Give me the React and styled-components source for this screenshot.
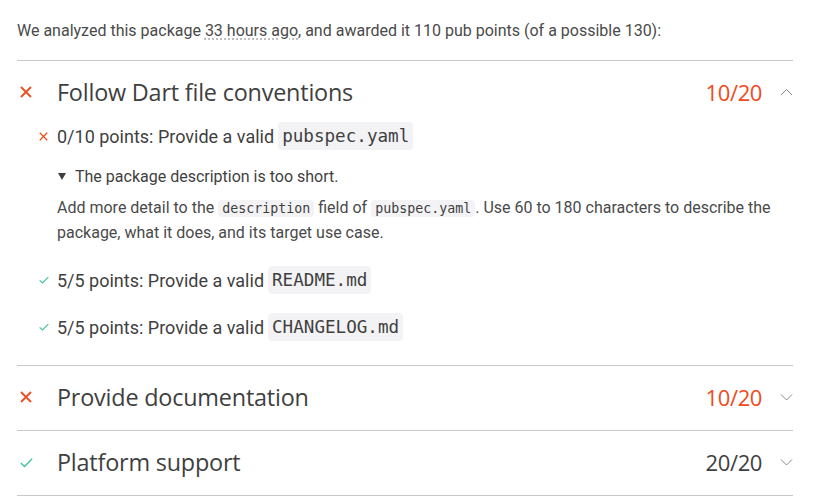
import React from "react";
import styled, { createGlobalStyle } from "styled-components";

const Global = createGlobalStyle`
  html, body { margin: 0; padding: 0; background: #fff; }
  body { font-family: Roboto, "Liberation Sans", sans-serif; color: #4a4a4a; }
`;

const ORANGE = "#ef4b1c";
const GREEN = "#3cc49c";

const Page = styled.div`
  width: 776px;
  padding: 19px 0 0 17px;
`;

const Intro = styled.p`
  margin: 0 0 17px;
  font-size: 16px;
  line-height: 24px;
  color: #4a4a4a;
`;

const Time = styled.span`
  text-decoration: underline dotted #b0b0b0;
  text-underline-offset: 3px;
`;

const Section = styled.section`
  border-top: 1px solid #c8c8c8;
  padding-bottom: ${(p) => (p.$open ? "23px" : "3px")};
  &:last-child { border-bottom: 1px solid #c8c8c8; }
`;

const Header = styled.div`
  display: flex;
  align-items: center;
  height: 60px;
  padding-top: 1px;
`;

const HeadIcon = styled.div`
  width: 40px;
  display: flex;
  align-items: center;
  padding-left: 3px;
  box-sizing: border-box;
`;

const Title = styled.h3`
  flex: 1;
  margin: 0;
  font-family: "Open Sans", Roboto, sans-serif;
  font-weight: 400;
  font-size: 23.4px;
  letter-spacing: -0.2px;
  color: #3f3f3f;
`;

const Score = styled.span`
  font-family: "Open Sans", Roboto, sans-serif;
  font-size: 22px;
  letter-spacing: -0.4px;
  color: ${(p) => (p.$fail ? ORANGE : "#3f3f3f")};
  margin-right: 18px;
`;

const Chevron = styled.div`
  width: 13px;
  display: flex;
  align-items: center;
`;

const Body = styled.div`
  padding-left: 22px;
`;

const Item = styled.div`
  margin-top: ${(p) => p.$mt}px;
`;

const ItemRow = styled.div`
  display: flex;
  align-items: center;
  height: 30px;
`;

const SmallIcon = styled.div`
  width: 18px;
  display: flex;
  align-items: center;
`;

const ItemText = styled.span`
  font-size: 18px;
  color: #3f3f3f;
`;

const Code = styled.code`
  font-family: "DejaVu Sans Mono", "Liberation Mono", monospace;
  font-size: ${(p) => (p.$small ? "13.3px" : "17.6px")};
  background: #f3f3f5;
  border-radius: 4px;
  padding: ${(p) => (p.$small ? "1px 4px" : "4px 4px")};
  color: #3f3f3f;
  margin-left: ${(p) => (p.$small ? "0" : "4px")};
`;

const Detail = styled.div`
  padding-left: 18px;
  margin-top: 13px;
`;

const Summary = styled.div`
  display: flex;
  align-items: center;
  height: 24px;
  font-size: 16px;
  color: #3f3f3f;
  padding-left: 1px;
`;

const Tri = styled.span`
  width: 17px;
  display: flex;
  align-items: center;
`;

const Para = styled.p`
  margin: 8px 0 0;
  font-size: 16px;
  line-height: 24px;
  color: #4a4a4a;
  width: 715px;
`;

const Cross = ({ size, w }) => (
  <svg width={size} height={size} viewBox="0 0 12 12">
    <path d="M1 1L11 11M11 1L1 11" stroke={ORANGE} strokeWidth={w} fill="none" />
  </svg>
);

const Check = ({ size, w }) => (
  <svg width={size} height={size} viewBox="0 0 12 12">
    <path d="M0.8 6.4L4.2 9.6L11.2 2.6" stroke={GREEN} strokeWidth={w} fill="none" />
  </svg>
);

const Chev = ({ up }) => (
  <svg width="13" height="8" viewBox="0 0 13 8">
    <path d={up ? "M1 7L6.5 1.5L12 7" : "M1 1.5L6.5 7L12 1.5"} stroke="#8a8a8a" strokeWidth="1" fill="none" />
  </svg>
);

const SectionHead = ({ ok, title, score, up }) => (
  <Header>
    <HeadIcon>{ok ? <Check size={13} w={1.3} /> : <Cross size={12} w={1.8} />}</HeadIcon>
    <Title>{title}</Title>
    <Score $fail={!ok}>{score}</Score>
    <Chevron><Chev up={up} /></Chevron>
  </Header>
);

export default function App() {
  return (
    <>
      <Global />
      <Page>
        <Intro>
          We analyzed this package <Time>33 hours ago</Time>, and awarded it 110 pub points (of a possible 130):
        </Intro>
        <Section $open>
          <SectionHead title="Follow Dart file conventions" score="10/20" up />
          <Body>
            <Item $mt={-1}>
              <ItemRow>
                <SmallIcon><Cross size={9} w={1.6} /></SmallIcon>
                <ItemText>0/10 points: Provide a valid</ItemText>
                <Code>pubspec.yaml</Code>
              </ItemRow>
              <Detail>
                <Summary>
                  <Tri>
                    <svg width="8" height="7" viewBox="0 0 8 7"><path d="M0 0H8L4 7Z" fill="#3f3f3f" /></svg>
                  </Tri>
                  The package description is too short.
                </Summary>
                <Para>
                  Add more detail to the <Code $small>description</Code> field of <Code $small>pubspec.yaml</Code>. Use 60 to 180 characters to describe the package, what it does, and its target use case.
                </Para>
              </Detail>
            </Item>
            <Item $mt={20}>
              <ItemRow>
                <SmallIcon><Check size={10} w={1.3} /></SmallIcon>
                <ItemText>5/5 points: Provide a valid</ItemText>
                <Code>README.md</Code>
              </ItemRow>
            </Item>
            <Item $mt={17}>
              <ItemRow>
                <SmallIcon><Check size={10} w={1.3} /></SmallIcon>
                <ItemText>5/5 points: Provide a valid</ItemText>
                <Code>CHANGELOG.md</Code>
              </ItemRow>
            </Item>
          </Body>
        </Section>
        <Section>
          <SectionHead title="Provide documentation" score="10/20" />
        </Section>
        <Section>
          <SectionHead ok title="Platform support" score="20/20" />
        </Section>
      </Page>
    </>
  );
}
